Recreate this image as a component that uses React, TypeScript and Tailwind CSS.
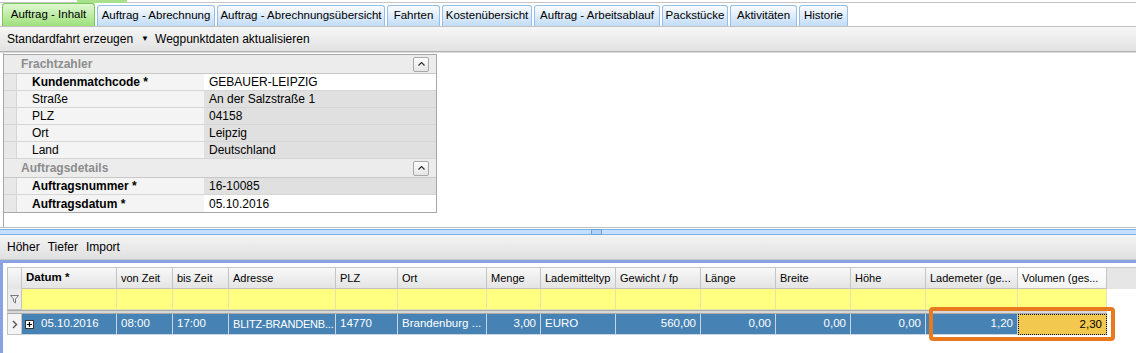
import React from 'react';

const font = { fontFamily: '"Liberation Sans", Arial, sans-serif' };

const tabs = [
  { label: 'Auftrag - Inhalt', w: 93, active: true },
  { label: 'Auftrag - Abrechnung', w: 118 },
  { label: 'Auftrag - Abrechnungsübersicht', w: 168 },
  { label: 'Fahrten', w: 53 },
  { label: 'Kostenübersicht', w: 90 },
  { label: 'Auftrag - Arbeitsablauf', w: 126 },
  { label: 'Packstücke', w: 66 },
  { label: 'Aktivitäten', w: 67 },
  { label: 'Historie', w: 49 },
];

type Col = { label: string; w: number; bold?: boolean; value: string; right?: boolean };

const cols: Col[] = [
  { label: 'Datum *', w: 95, bold: true, value: '05.10.2016' },
  { label: 'von Zeit', w: 56, value: '08:00' },
  { label: 'bis Zeit', w: 56, value: '17:00' },
  { label: 'Adresse', w: 107, value: 'BLITZ-BRANDENB...' },
  { label: 'PLZ', w: 62, value: '14770' },
  { label: 'Ort', w: 89, value: 'Brandenburg ...' },
  { label: 'Menge', w: 54, value: '3,00', right: true },
  { label: 'Lademitteltyp', w: 75, value: 'EURO' },
  { label: 'Gewicht / fp', w: 85, value: '560,00', right: true },
  { label: 'Länge', w: 75, value: '0,00', right: true },
  { label: 'Breite', w: 75, value: '0,00', right: true },
  { label: 'Höhe', w: 75, value: '0,00', right: true },
  { label: 'Lademeter (ge...', w: 92, value: '1,20', right: true },
  { label: 'Volumen (ges...', w: 89, value: '2,30', right: true },
];

const CollapseBtn = () => (
  <div className="mr-[7px] flex h-[15px] w-[16px] items-center justify-center rounded-[2px] border border-[#a8a8a8] bg-gradient-to-b from-white to-[#e4e4e4]">
    <svg width="7" height="4" viewBox="0 0 7 4">
      <path d="M0.5 3.5 L3.5 0.5 L6.5 3.5" fill="none" stroke="#333" strokeWidth="1.2" />
    </svg>
  </div>
);

const Category = ({ title }: { title: string }) => (
  <div className="flex h-[19px] items-center justify-between border-b border-[#c8c8c8] bg-[#ececec]">
    <span className="pl-[17px] text-[12px] font-bold text-[#8c8c8c]">{title}</span>
    <CollapseBtn />
  </div>
);

const PropRow = ({ label, value, bold, editable, last }: { label: string; value: string; bold?: boolean; editable?: boolean; last?: boolean }) => (
  <div className={`flex h-[17px] text-[12px] ${last ? '' : 'border-b border-[#d6d6d6]'}`}>
    <div className="w-[13px] shrink-0 border-r border-[#d6d6d6] bg-[#e8e8e8]" />
    <div className={`flex w-[187px] shrink-0 items-center bg-[#f4f4f4] pl-[15px] ${bold ? 'font-bold' : ''}`}>{label}</div>
    <div className={`flex flex-1 items-center pl-[5px] ${editable ? 'bg-white' : 'bg-[#e0e0e0]'}`}>{value}</div>
  </div>
);

const Tab = ({ label, w, active }: { label: string; w: number; active?: boolean }) => (
  <div
    className={`flex items-center justify-center whitespace-nowrap rounded-t-[3px] border border-b-0 text-[11.5px] ${
      active
        ? 'h-[23px] border-[#78c85a] bg-gradient-to-b from-[#e0f8d0] to-[#9ee07c]'
        : 'h-[21px] border-[#98bde6] bg-gradient-to-b from-[#fafcff] to-[#c2dcf8]'
    }`}
    style={{ width: w }}
  >
    {label}
  </div>
);

export default function App() {
  return (
    <div className="relative h-[353px] w-[1136px] overflow-hidden bg-white text-black" style={font}>
      {/* top strip */}
      <div className="flex h-[4px]">
        <div className="mt-[2px] h-[1px] w-[77px] bg-[#c4c4c4]" />
        <div className="h-[3px] w-[50px] bg-[#a8e08c]" />
        <div className="mt-[2px] h-[1px] flex-1 bg-[#c4c4c4]" />
      </div>

      {/* tabs */}
      <div className="flex h-[22px] items-end gap-[2px] pl-[2px]">
        {tabs.map((t) => (
          <Tab key={t.label} {...t} />
        ))}
      </div>

      {/* toolbar */}
      <div className="flex h-[25px] items-center border-t border-[#c0c0c0] bg-gradient-to-b from-[#f6f6f6] to-[#e2e2e2] pl-[7px] text-[12px]">
        <span>Standardfahrt erzeugen</span>
        <span className="ml-[8px] mr-[6px] text-[8px]">▼</span>
        <span>Wegpunktdaten aktualisieren</span>
      </div>
      <div className="h-[2px] border-t border-[#b0b0b0] bg-[#dcdcdc]" />

      {/* upper panel */}
      <div className="ml-[3px] h-[174px] border-l border-[#a8a8a8] pt-[1px]">
        <div className="w-[433px] border border-l-0 border-[#a8a8a8]">
          <Category title="Frachtzahler" />
          <PropRow label="Kundenmatchcode *" value="GEBAUER-LEIPZIG" bold editable />
          <PropRow label="Straße" value="An der Salzstraße 1" />
          <PropRow label="PLZ" value="04158" />
          <PropRow label="Ort" value="Leipzig" />
          <PropRow label="Land" value="Deutschland" />
          <Category title="Auftragsdetails" />
          <PropRow label="Auftragsnummer *" value="16-10085" bold />
          <PropRow label="Auftragsdatum *" value="05.10.2016" bold editable last />
        </div>
      </div>

      {/* splitter */}
      <div className="h-[1px] bg-[#c0c0c0]" />
      <div className="h-[1px] bg-white" />
      <div className="relative h-[6px] border-y border-[#7eb2e6] bg-[#c4e0fc]">
        <div className="absolute left-[591px] top-[-1px] h-[6px] w-[11px] border border-[#6aa2da] bg-[#b0d2f6]" />
      </div>

      {/* bottom toolbar */}
      <div className="flex h-[25px] items-center gap-[8px] border-b border-[#c8c8c8] bg-gradient-to-b from-[#f4f4f4] to-[#e0e0e0] pl-[7px] text-[12px]">
        <span>Höher</span>
        <span>Tiefer</span>
        <span>Import</span>
      </div>

      {/* grid */}
      <div className="h-[94px] border-l-[3px] border-t-[3px] border-[#8aa2e2] bg-white pl-[4px] pt-[4px] text-[11.5px]">
        {/* header */}
        <div className="flex h-[22px] border-t border-[#c8c8c8] bg-[#e6e6e6] text-[11px]">
          <div className="w-[15px] shrink-0 border-x border-[#c4c4c4] bg-gradient-to-b from-[#f8f8f8] to-[#e4e4e4]" />
          {cols.map((c, i) => (
            <div
              key={c.label}
              className={`flex shrink-0 items-center overflow-hidden border-r border-b border-[#c4c4c4] pl-[4px] ${c.bold ? 'font-bold text-[11.5px]' : ''} ${
                i === cols.length - 1 ? 'bg-gradient-to-b from-white to-[#f4f4f4]' : 'bg-gradient-to-b from-[#f8f8f8] to-[#e4e4e4]'
              }`}
              style={{ width: c.w }}
            >
              <span className="whitespace-nowrap">{c.label}</span>
            </div>
          ))}
        </div>

        {/* filter row */}
        <div className="flex h-[21px]">
          <div className="flex w-[15px] shrink-0 items-center justify-center border-x border-b border-[#c4c4c4] bg-[#ececec]">
            <svg width="9" height="9" viewBox="0 0 9 9">
              <path d="M0.5 0.5 H8.5 L5.5 4 V8 L3.5 6.5 V4 Z" fill="none" stroke="#7a7a7a" strokeWidth="1" />
            </svg>
          </div>
          {cols.map((c) => (
            <div key={c.label} className="shrink-0 border-r border-b border-[#e4e4b0] bg-[#ffff80]" style={{ width: c.w }} />
          ))}
        </div>

        {/* separator */}
        <div className="h-[4px] w-[1100px] border-y border-[#a8a8a8] bg-[#d8d8d8]" />

        {/* data row */}
        <div className="flex h-[21px]">
          <div className="flex w-[15px] shrink-0 items-center justify-center border-x border-b border-[#c4c4c4] bg-[#f4f4f4]">
            <svg width="6" height="9" viewBox="0 0 6 9">
              <path d="M1 1 L4.5 4.5 L1 8" fill="none" stroke="#555" strokeWidth="1.4" />
            </svg>
          </div>
          {cols.map((c, i) => {
            const last = i === cols.length - 1;
            return (
              <div
                key={c.label}
                className={`flex shrink-0 items-center overflow-hidden whitespace-nowrap ${
                  last
                    ? 'border border-dotted border-black bg-[#f2c94e] text-black'
                    : 'border-r border-b border-[#c8d4e0] bg-[#4682b4] text-white'
                } ${c.right ? 'justify-end pr-[4px]' : 'pl-[4px]'} ${i === 3 ? 'text-[11px] tracking-[-0.2px]' : ''}`}
                style={{ width: c.w }}
              >
                {i === 0 && (
                  <span className="mr-[7px] ml-[-1px] flex h-[9px] w-[9px] shrink-0 items-center justify-center border border-[#333] bg-white">
                    <svg width="7" height="7" viewBox="0 0 7 7">
                      <path d="M1 3.5 H6 M3.5 1 V6" stroke="#000" strokeWidth="1.2" />
                    </svg>
                  </span>
                )}
                {c.value}
              </div>
            );
          })}
        </div>
      </div>

      {/* highlight annotation */}
      <div className="absolute left-[929px] top-[307px] h-[34px] w-[186px] rounded-[4px] border-[4px] border-[#e8791f]" />
    </div>
  );
}
